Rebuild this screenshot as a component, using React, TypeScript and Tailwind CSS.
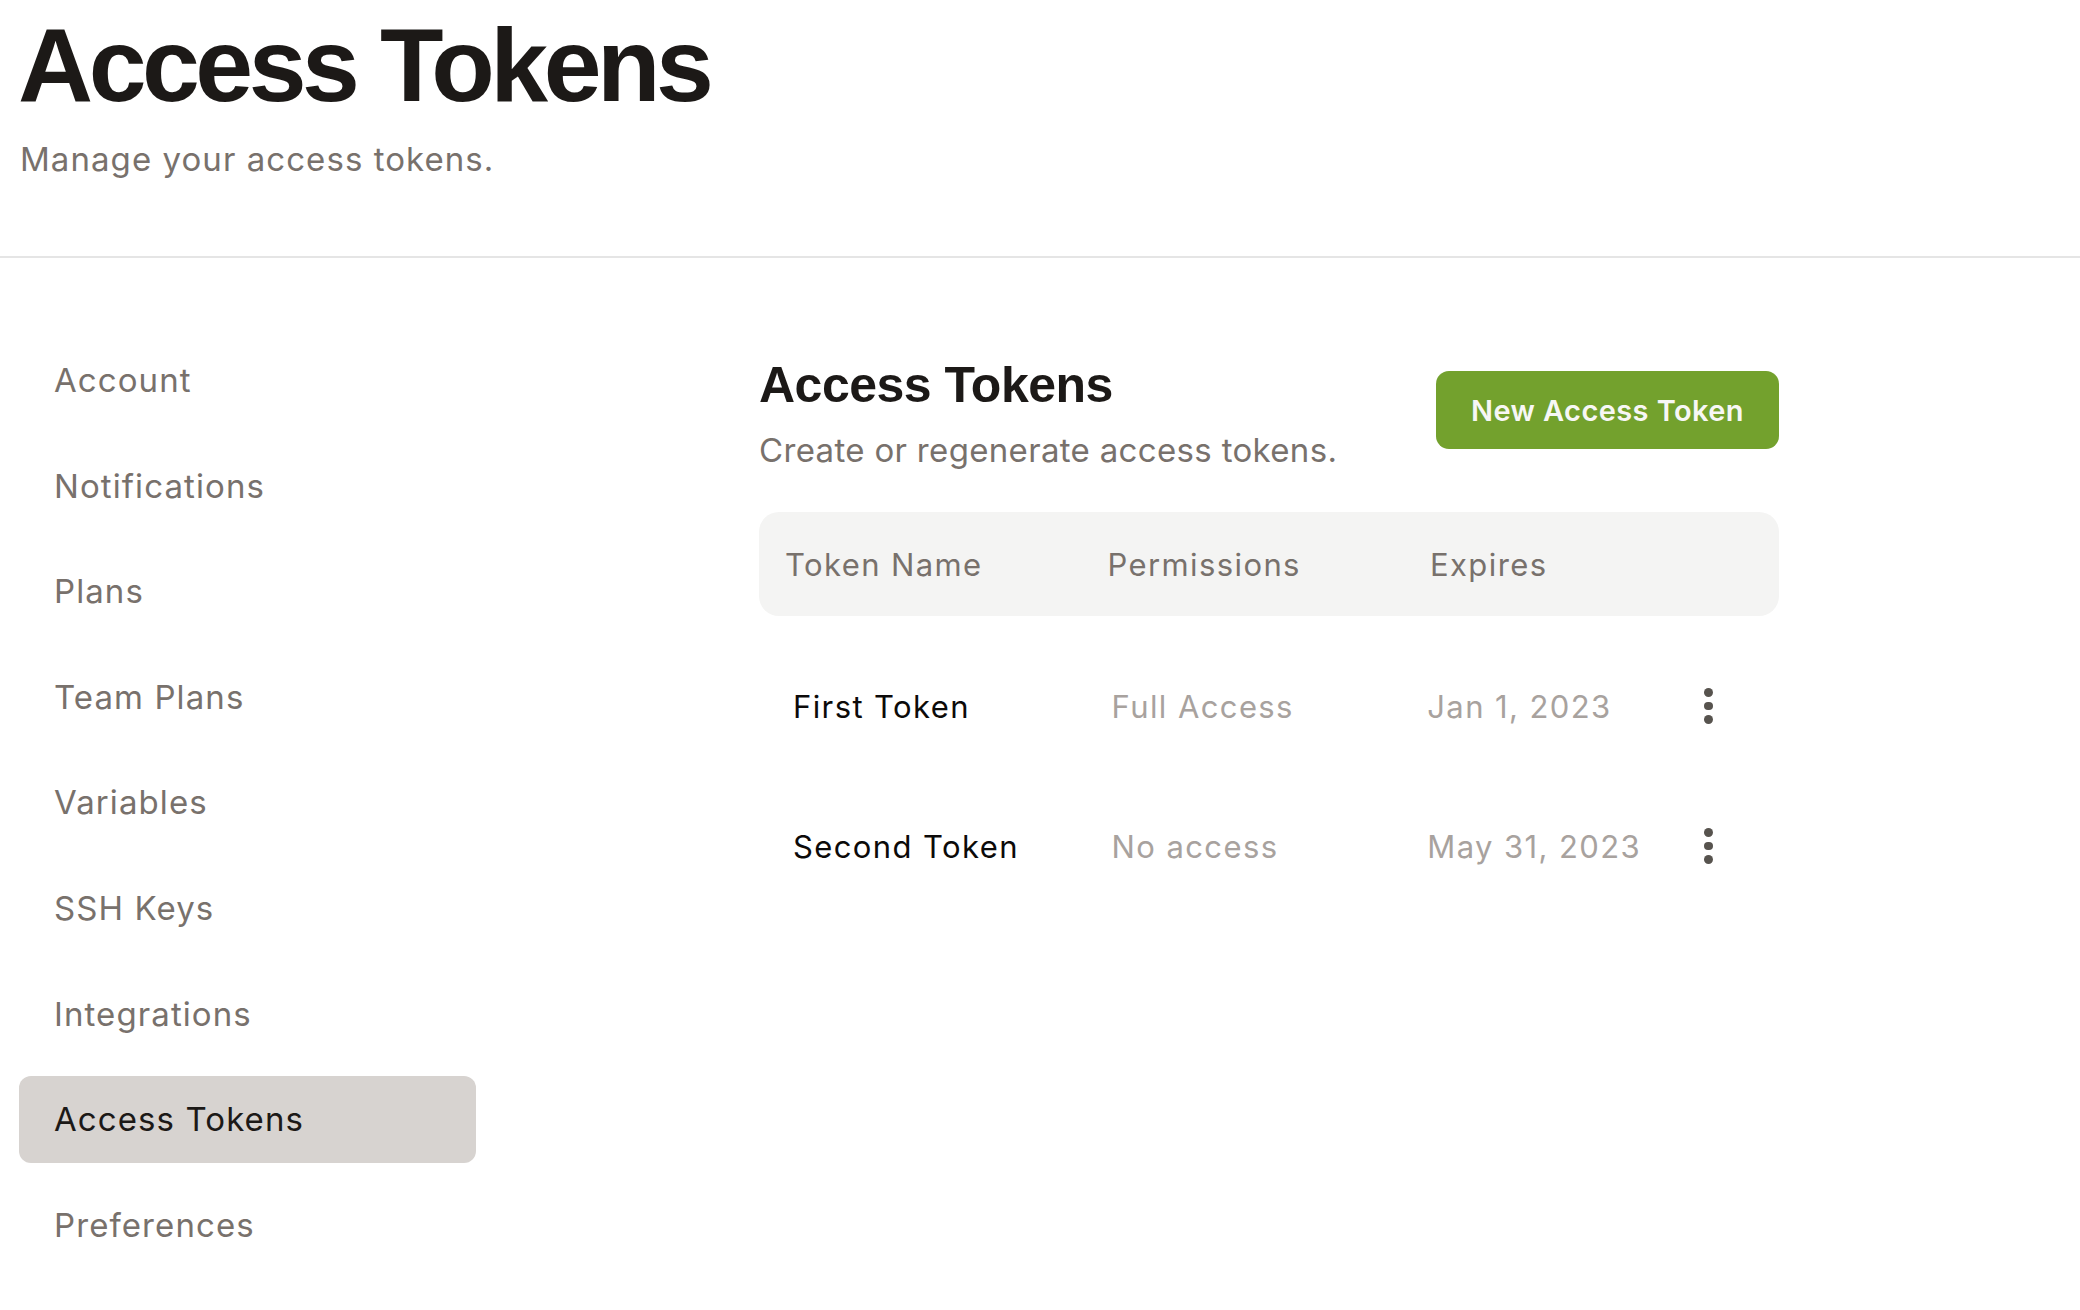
import React from "react";

const navItems = [
  "Account",
  "Notifications",
  "Plans",
  "Team Plans",
  "Variables",
  "SSH Keys",
  "Integrations",
  "Access Tokens",
  "Preferences",
];

const tokens = [
  { name: "First Token", perm: "Full Access", expires: "Jan 1, 2023" },
  { name: "Second Token", perm: "No access", expires: "May 31, 2023" },
];

function Dots() {
  return (
    <div className="flex w-[22px] flex-col items-center gap-[4.6px]">
      <span className="block h-[8.7px] w-[8.7px] rounded-full bg-[#57534e]" />
      <span className="block h-[8.7px] w-[8.7px] rounded-full bg-[#57534e]" />
      <span className="block h-[8.7px] w-[8.7px] rounded-full bg-[#57534e]" />
    </div>
  );
}

export default function App() {
  return (
    <div className="min-h-[1310px] w-full bg-white font-['Inter',sans-serif]">
      <header className="border-b-2 border-[#e5e5e5] pb-[80px] pl-[18px]">
        <h1 className="pt-[13px] font-['Liberation_Sans',Arial,sans-serif] text-[104px] font-bold leading-none tracking-[-0.043em] text-[#1c1917]">
          Access Tokens
        </h1>
        <p className="mt-[26px] pl-[2px] text-[33px] leading-none tracking-[0.032em] text-[#78716c]">
          Manage your access tokens.
        </p>
      </header>

      <div className="flex pt-[79px]">
        <nav className="ml-[19px] flex w-[457px] flex-col gap-[18.6px]">
          {navItems.map((item) => {
            const active = item === "Access Tokens";
            return (
              <div
                key={item}
                className={
                  active
                    ? "flex h-[87px] items-center rounded-[12px] bg-[#d7d3d0] pl-[35px] text-[33px] leading-none tracking-[0.033em] text-[#1c1917]"
                    : "flex h-[87px] items-center pl-[35px] text-[33px] leading-none tracking-[0.033em] text-[#78716c]"
                }
              >
                {item}
              </div>
            );
          })}
        </nav>

        <main className="ml-[283px] w-[1020px]">
          <div className="flex items-start justify-between pt-[23px]">
            <div>
              <h2 className="font-['Liberation_Sans',Arial,sans-serif] text-[50px] font-bold leading-none tracking-[-0.01em] text-[#1c1917]">
                Access Tokens
              </h2>
              <p className="mt-[24px] text-[33px] leading-none tracking-[0.01em] text-[#78716c]">
                Create or regenerate access tokens.
              </p>
            </div>
            <button className="mt-[11px] flex h-[78px] w-[343px] items-center justify-center rounded-[13px] bg-[#73a12d] text-[29px] font-semibold leading-none tracking-[0.014em] text-[#f7f7f5]">
              New Access Token
            </button>
          </div>

          <div className="mt-[45px] flex h-[104px] items-center rounded-[20px] bg-[#f4f4f3] pl-[26px] text-[31px] leading-none tracking-[0.045em] text-[#78716c]">
            <div className="w-[322.5px]">Token Name</div>
            <div className="w-[322.5px]">Permissions</div>
            <div>Expires</div>
          </div>

          <div className="pt-[20px]">
            {tokens.map((t) => (
              <div
                key={t.name}
                className="flex h-[140px] items-center pl-[34px] text-[31px] leading-none tracking-[0.045em]"
              >
                <div className="w-[318.6px] text-[#0c0a09]">{t.name}</div>
                <div className="w-[315.7px] text-[#a8a29e]">{t.perm}</div>
                <div className="w-[270px] text-[#a8a29e]">{t.expires}</div>
                <Dots />
              </div>
            ))}
          </div>
        </main>
      </div>
    </div>
  );
}
